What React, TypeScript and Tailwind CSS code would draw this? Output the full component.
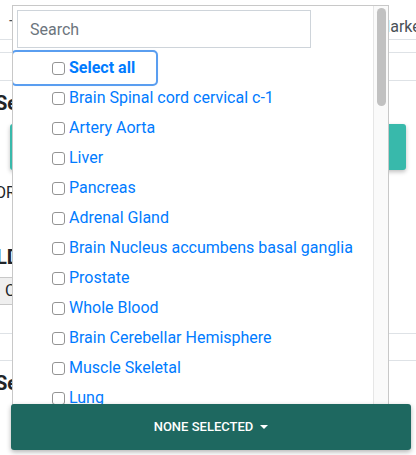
const TISSUES = [
  "Brain Spinal cord cervical c-1",
  "Artery Aorta",
  "Liver",
  "Pancreas",
  "Adrenal Gland",
  "Brain Nucleus accumbens basal ganglia",
  "Prostate",
  "Whole Blood",
  "Brain Cerebellar Hemisphere",
  "Muscle Skeletal",
  "Lung",
  "Thyroid",
];

const font = { fontFamily: '"Roboto", "Liberation Sans", sans-serif' };

function PageBehind() {
  return (
    <div className="flex h-full flex-col text-[#212529]">
      <div className="flex h-[40px] shrink-0 items-end justify-between border-b border-[#dee2e6] pb-[2px] pl-[9px] text-[16px] leading-[20px] text-[#495057]">
        <span>Tissue</span>
        <span className="whitespace-nowrap pl-[320px]">Markers</span>
      </div>
      <div className="mt-[12px] h-[29px] shrink-0 border-y border-[#dee2e6]" />
      <div className="-ml-[5px] mt-[10px] h-[24px] shrink-0 whitespace-nowrap text-[20px] font-bold leading-[24px]">
        Select tissue
      </div>
      <div className="mx-[10px] mt-[9px] h-[46px] shrink-0 rounded-[3px] bg-[#38b9ab] shadow-[0_2px_4px_rgba(0,0,0,0.25)]" />
      <div className="-ml-[5px] mt-[13px] h-[20px] shrink-0 text-[16px] leading-[20px]">OR</div>
      <div className="-ml-[4px] mt-[42px] h-[24px] shrink-0 whitespace-nowrap text-[20px] font-bold leading-[24px]">
        LD block
      </div>
      <div className="-ml-[6px] mt-[8px] flex h-[28px] w-[200px] shrink-0 items-center border border-[#c8c8c8] bg-[#efefef] px-[10px] text-[16px]">
        Choose file
      </div>
      <div className="mt-[28px] h-[28px] shrink-0 border-y border-[#dee2e6]" />
      <div className="-ml-[5px] mt-[10px] h-[24px] shrink-0 whitespace-nowrap text-[20px] font-bold leading-[24px]">
        Select marker
      </div>
    </div>
  );
}

function Box() {
  return (
    <input
      type="checkbox"
      className="m-0 h-[13px] w-[13px] shrink-0 appearance-none rounded-[3px] border border-[#949494] bg-white"
    />
  );
}

function Dropdown() {
  return (
    <div className="absolute left-[12px] top-[5px] flex h-[400px] w-[377px] overflow-hidden border border-[#c8c8c8] bg-white">
      <div className="flex min-w-0 flex-1 flex-col">
        <div className="pl-[4px] pr-[62px] pt-[4px]">
          <input
            type="text"
            placeholder="Search"
            className="h-[38px] w-full border border-[#ced4da] bg-white px-[12px] text-[16px] text-[#495057] outline-none placeholder:text-[#6c757d]"
          />
        </div>
        <ul className="mt-[5px] flex flex-col">
          <li className="flex h-[30px] items-center">
            <label className="flex h-[32px] items-center gap-[4px] rounded-[3px] pl-[39px] pr-[21px] text-[16px] font-bold text-[#007bff] outline outline-2 outline-[#5a9ef0] shadow-[0_0_3px_rgba(0,123,255,0.5)]">
              <Box />
              Select all
            </label>
          </li>
          {TISSUES.map((t) => (
            <li key={t} className="flex h-[30px] items-center">
              <label className="flex items-center gap-[4px] whitespace-nowrap pl-[39px] text-[16px] text-[#007bff]">
                <Box />
                {t}
              </label>
            </li>
          ))}
        </ul>
      </div>
      <div className="flex w-[15px] shrink-0 justify-center border-l border-[#e6e6e6] bg-[#fafafa] pt-[2px]">
        <div className="h-[98px] w-[9px] rounded-full bg-[#c1c1c1]" />
      </div>
    </div>
  );
}

export default function App() {
  return (
    <div className="relative h-[455px] w-[416px] overflow-hidden bg-white" style={font}>
      <PageBehind />
      <div className="absolute left-[310px] top-[10px] h-[27px] w-[62px] rounded-[3px] bg-[#38b9ab] shadow-[0_2px_4px_rgba(0,0,0,0.25)]" />
      <Dropdown />
      <button
        type="button"
        className="absolute left-[11px] top-[404px] flex h-[46px] w-[400px] items-center justify-center gap-[7px] rounded-[3px] bg-[#1e6860] text-[13px] font-medium uppercase text-white shadow-[0_2px_5px_rgba(0,0,0,0.3)]"
      >
        None selected
        <span className="h-0 w-0 border-x-[4px] border-t-[4px] border-x-transparent border-t-white" />
      </button>
    </div>
  );
}
